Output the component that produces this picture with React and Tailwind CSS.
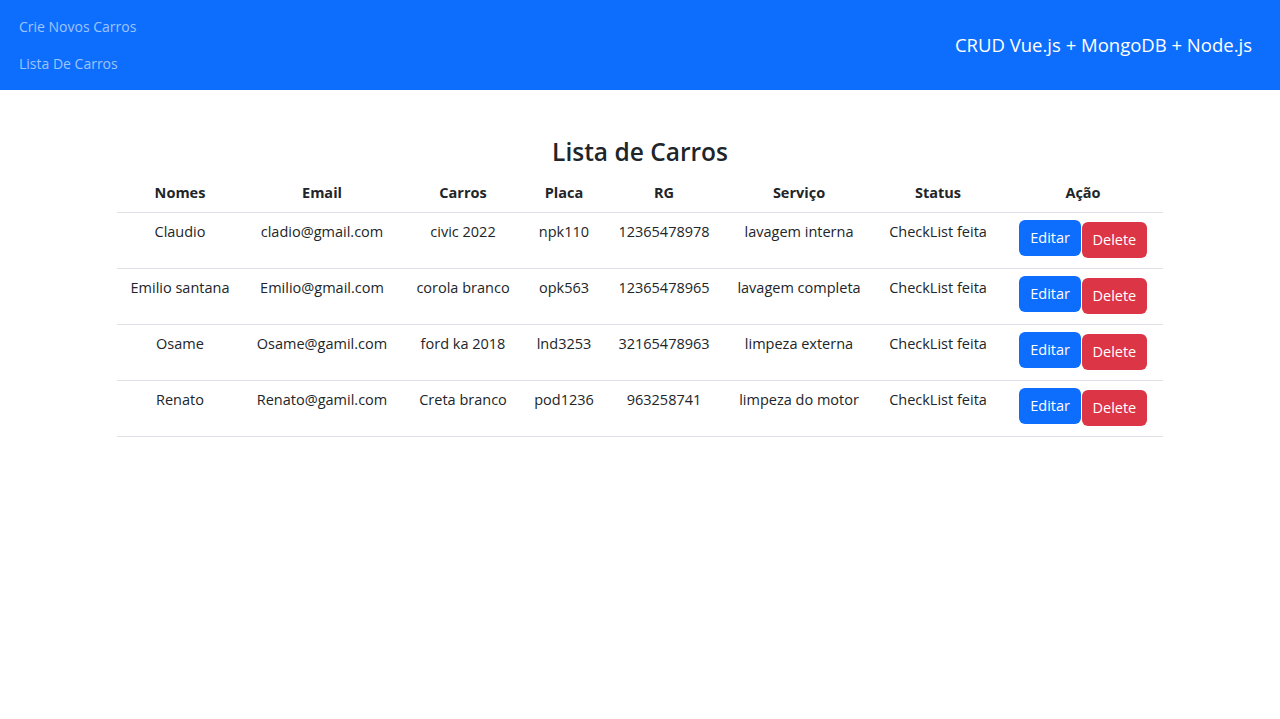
import React from "react";

const carros = [
  { nome: "Claudio", email: "cladio@gmail.com", carro: "civic 2022", placa: "npk110", rg: "12365478978", servico: "lavagem interna", status: "CheckList feita" },
  { nome: "Emilio santana", email: "Emilio@gmail.com", carro: "corola branco", placa: "opk563", rg: "12365478965", servico: "lavagem completa", status: "CheckList feita" },
  { nome: "Osame", email: "Osame@gamil.com", carro: "ford ka 2018", placa: "lnd3253", rg: "32165478963", servico: "limpeza externa", status: "CheckList feita" },
  { nome: "Renato", email: "Renato@gamil.com", carro: "Creta branco", placa: "pod1236", rg: "963258741", servico: "limpeza do motor", status: "CheckList feita" },
];

const colunas = [
  ["Nomes", "w-[126px]"],
  ["Email", "w-[158px]"],
  ["Carros", "w-[124px]"],
  ["Placa", "w-[78px]"],
  ["RG", "w-[122px]"],
  ["Serviço", "w-[148px]"],
  ["Status", "w-[130px]"],
  ["Ação", ""],
];

export default function App() {
  return (
    <div className="min-h-screen bg-white text-[#212529] font-['Open_Sans',sans-serif]">
      <nav className="h-[90px] bg-[#0d6efd] flex items-center justify-between px-[19px]">
        <div className="flex flex-col gap-[16px] text-[14px] text-white/60">
          <a href="#">Crie Novos Carros</a>
          <a href="#">Lista De Carros</a>
        </div>
        <span className="text-[18.5px] text-white mr-[9px]">CRUD Vue.js + MongoDB + Node.js</span>
      </nav>

      <main className="max-w-[1046px] mx-auto">
        <h2 className="text-center text-[24.5px] font-semibold mt-[44px] mb-[9px]">Lista de Carros</h2>
        <table className="w-full table-fixed text-center text-[14.5px]">
          <thead>
            <tr className="border-b border-[#dee2e6]">
              {colunas.map(([c, w]) => (
                <th key={c} className={`${w} font-bold pt-[2px] pb-[8px] px-2`}>{c}</th>
              ))}
            </tr>
          </thead>
          <tbody>
            {carros.map((c) => (
              <tr key={c.placa} className="h-[56px] border-b border-[#dee2e6] align-top">
                <td className="pt-[8px] px-1">{c.nome}</td>
                <td className="pt-[8px] px-1">{c.email}</td>
                <td className="pt-[8px] px-1">{c.carro}</td>
                <td className="pt-[8px] px-1">{c.placa}</td>
                <td className="pt-[8px] px-1">{c.rg}</td>
                <td className="pt-[8px] px-1">{c.servico}</td>
                <td className="pt-[8px] px-1">{c.status}</td>
                <td className="pt-[7px] px-2">
                  <div className="flex justify-center items-start">
                    <button className="h-[36px] px-[11px] rounded-[6px] bg-[#0d6efd] text-white text-[14.5px]">Editar</button>
                    <button className="h-[36px] px-[10.5px] mt-[2px] ml-px rounded-[6px] bg-[#dc3545] text-white text-[14.5px]">Delete</button>
                  </div>
                </td>
              </tr>
            ))}
          </tbody>
        </table>
      </main>
    </div>
  );
}
